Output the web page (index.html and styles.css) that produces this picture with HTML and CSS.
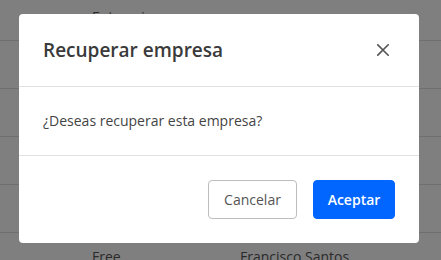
FILE: index.html
```html
<!DOCTYPE html>
<html lang="es">
<head>
<meta charset="utf-8">
<title>Recuperar empresa</title>
<link rel="stylesheet" href="styles.css">
</head>
<body>
<div class="table">
  <div class="row"><span></span><span>Enterprise</span><span></span></div>
  <div class="row"></div>
  <div class="row"></div>
  <div class="row"></div>
  <div class="row"></div>
  <div class="row"><span></span><span>Free</span><span>Francisco Santos</span></div>
</div>

<div class="overlay">
  <div class="modal" role="dialog" aria-labelledby="modal-title">
    <div class="modal-header">
      <h2 class="modal-title" id="modal-title">Recuperar empresa</h2>
      <button class="close-btn" aria-label="Cerrar">
        <svg width="12" height="12" viewBox="0 0 12 12"><path d="M0.8 0.8 L11.2 11.2 M11.2 0.8 L0.8 11.2" stroke="#555" stroke-width="1.6" fill="none" stroke-linecap="square"/></svg>
      </button>
    </div>
    <div class="modal-body">¿Deseas recuperar esta empresa?</div>
    <div class="modal-footer">
      <button class="btn btn-secondary">Cancelar</button>
      <button class="btn btn-primary">Aceptar</button>
    </div>
  </div>
</div>
</body>
</html>
```
FILE: styles.css
```css
* { box-sizing: border-box; }

html, body {
  height: 100%;
  overflow: hidden;
}

body {
  margin: 0;
  background: #fff;
  font-family: "Open Sans", "Noto Sans", sans-serif;
  color: #444;
}

.table {
  margin-top: -7px;
}

.row {
  display: grid;
  grid-template-columns: 92px 148px 1fr;
  align-items: center;
  height: 48px;
  border-bottom: 1px solid #dedede;
  font-size: 14px;
  color: #555;
}

.overlay {
  position: fixed;
  inset: 0;
  background: rgba(0, 0, 0, 0.5);
  padding: 14px 0 0 19px;
}

.modal {
  width: 400px;
  background: #fff;
  border-radius: 4px;
}

.modal-header {
  height: 73px;
  display: flex;
  align-items: center;
  justify-content: space-between;
  padding: 0 24px;
  border-bottom: 1px solid #e2e2e2;
}

.modal-title {
  margin: 0;
  font-size: 19px;
  font-weight: 600;
  color: #3a3a3a;
}

.close-btn {
  width: 24px;
  height: 24px;
  padding: 0;
  border: 0;
  background: none;
  display: flex;
  align-items: center;
  justify-content: center;
  margin-top: -1px;
}

.modal-body {
  padding: 24px;
  font-size: 14px;
  line-height: 20px;
  color: #444;
  border-bottom: 1px solid #e2e2e2;
}

.modal-footer {
  display: flex;
  justify-content: flex-end;
  gap: 16px;
  padding: 24px;
}

.btn {
  height: 39px;
  border-radius: 4px;
  font-family: inherit;
  font-size: 14px;
  padding: 0;
  display: flex;
  align-items: center;
  justify-content: center;
}

.btn-secondary {
  width: 89px;
  background: #fff;
  border: 1px solid #bdbdbd;
  color: #555;
}

.btn-primary {
  width: 82px;
  background: #0066ff;
  border: 1px solid #0066ff;
  color: #fff;
  font-weight: 600;
}
```
